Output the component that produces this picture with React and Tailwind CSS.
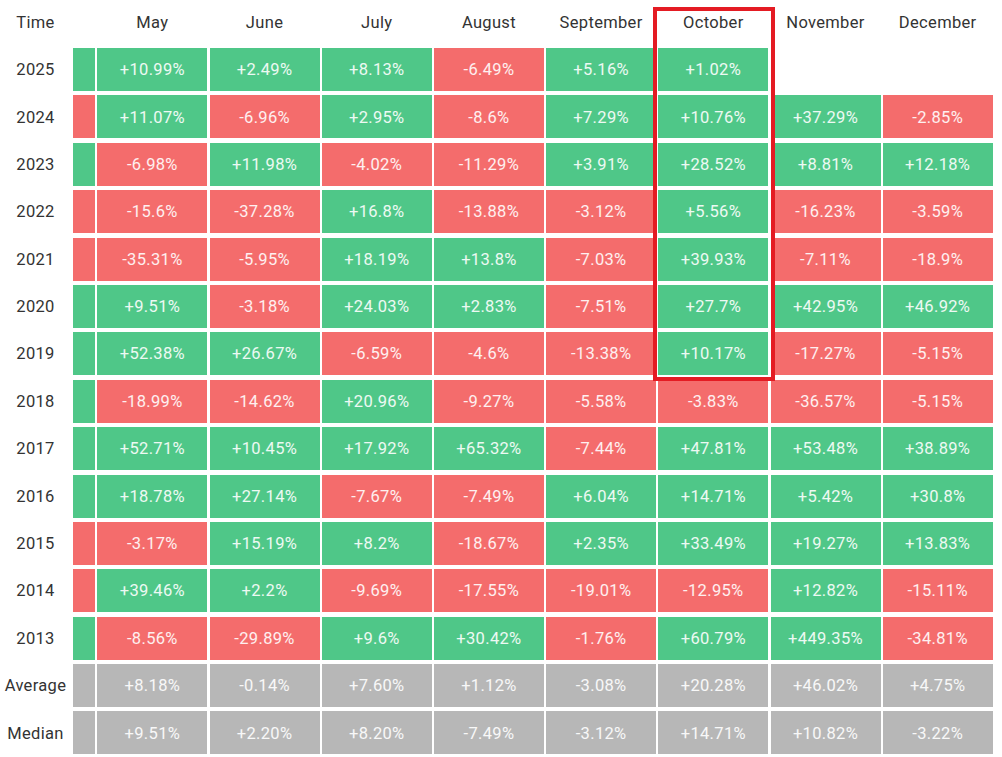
import React from 'react';

const months = ['May', 'June', 'July', 'August', 'September', 'October', 'November', 'December'];

// first value is the narrow (cut off) column: 'g' | 'r' | 'n'
const rows = [
  { label: '2025', lead: 'g', values: ['+10.99%', '+2.49%', '+8.13%', '-6.49%', '+5.16%', '+1.02%', null, null] },
  { label: '2024', lead: 'r', values: ['+11.07%', '-6.96%', '+2.95%', '-8.6%', '+7.29%', '+10.76%', '+37.29%', '-2.85%'] },
  { label: '2023', lead: 'g', values: ['-6.98%', '+11.98%', '-4.02%', '-11.29%', '+3.91%', '+28.52%', '+8.81%', '+12.18%'] },
  { label: '2022', lead: 'r', values: ['-15.6%', '-37.28%', '+16.8%', '-13.88%', '-3.12%', '+5.56%', '-16.23%', '-3.59%'] },
  { label: '2021', lead: 'r', values: ['-35.31%', '-5.95%', '+18.19%', '+13.8%', '-7.03%', '+39.93%', '-7.11%', '-18.9%'] },
  { label: '2020', lead: 'g', values: ['+9.51%', '-3.18%', '+24.03%', '+2.83%', '-7.51%', '+27.7%', '+42.95%', '+46.92%'] },
  { label: '2019', lead: 'g', values: ['+52.38%', '+26.67%', '-6.59%', '-4.6%', '-13.38%', '+10.17%', '-17.27%', '-5.15%'] },
  { label: '2018', lead: 'g', values: ['-18.99%', '-14.62%', '+20.96%', '-9.27%', '-5.58%', '-3.83%', '-36.57%', '-5.15%'] },
  { label: '2017', lead: 'g', values: ['+52.71%', '+10.45%', '+17.92%', '+65.32%', '-7.44%', '+47.81%', '+53.48%', '+38.89%'] },
  { label: '2016', lead: 'g', values: ['+18.78%', '+27.14%', '-7.67%', '-7.49%', '+6.04%', '+14.71%', '+5.42%', '+30.8%'] },
  { label: '2015', lead: 'r', values: ['-3.17%', '+15.19%', '+8.2%', '-18.67%', '+2.35%', '+33.49%', '+19.27%', '+13.83%'] },
  { label: '2014', lead: 'r', values: ['+39.46%', '+2.2%', '-9.69%', '-17.55%', '-19.01%', '-12.95%', '+12.82%', '-15.11%'] },
  { label: '2013', lead: 'g', values: ['-8.56%', '-29.89%', '+9.6%', '+30.42%', '-1.76%', '+60.79%', '+449.35%', '-34.81%'] },
  { label: 'Average', lead: 'n', neutral: true, values: ['+8.18%', '-0.14%', '+7.60%', '+1.12%', '-3.08%', '+20.28%', '+46.02%', '+4.75%'] },
  { label: 'Median', lead: 'n', neutral: true, values: ['+9.51%', '+2.20%', '+8.20%', '-7.49%', '-3.12%', '+14.71%', '+10.82%', '-3.22%'] },
];

const leadBg = { g: 'bg-[#4fc788]', r: 'bg-[#f46c6c]', n: 'bg-[#b7b7b7]' };

const Cell = ({ value, neutral }) => {
  if (value == null) return <div className="h-[43px]" />;
  const bg = neutral ? 'bg-[#b7b7b7]' : value.startsWith('-') ? 'bg-[#f46c6c]' : 'bg-[#4fc788]';
  return (
    <div className={`h-[43px] pt-[2px] flex items-center justify-center text-[16.5px] tracking-[0.02em] text-white/90 ${bg}`}>
      {value}
    </div>
  );
};

export default function App() {
  return (
    <div className="w-[1002px] h-[757px] bg-white overflow-hidden font-['Roboto',sans-serif]">
      <div className="relative grid grid-cols-[71px_22px_repeat(8,110px)] gap-x-[2.2px] gap-y-[4.4px]">
        <div className="h-[43.6px] pt-[3px] flex items-center justify-center text-[16.5px] tracking-[0.02em] text-[#333]">Time</div>
        <div />
        {months.map((m) => (
          <div key={m} className="h-[43.6px] pt-[3px] flex items-center justify-center text-[16.5px] tracking-[0.02em] text-[#333]">
            {m}
          </div>
        ))}

        {rows.map((r) => (
          <React.Fragment key={r.label}>
            <div className="h-[43px] pt-[2px] flex items-center justify-center text-[16.5px] tracking-[0.02em] text-[#333]">{r.label}</div>
            <div className={`h-[43px] ${leadBg[r.lead]}`} />
            {r.values.map((v, i) => (
              <Cell key={i} value={v} neutral={r.neutral} />
            ))}
          </React.Fragment>
        ))}

        {/* highlight around October 2025-2019 */}
        <div className="absolute left-[653px] top-[7px] w-[122px] h-[374px] border-[4.5px] border-[#e41b23]" />
      </div>
    </div>
  );
}
